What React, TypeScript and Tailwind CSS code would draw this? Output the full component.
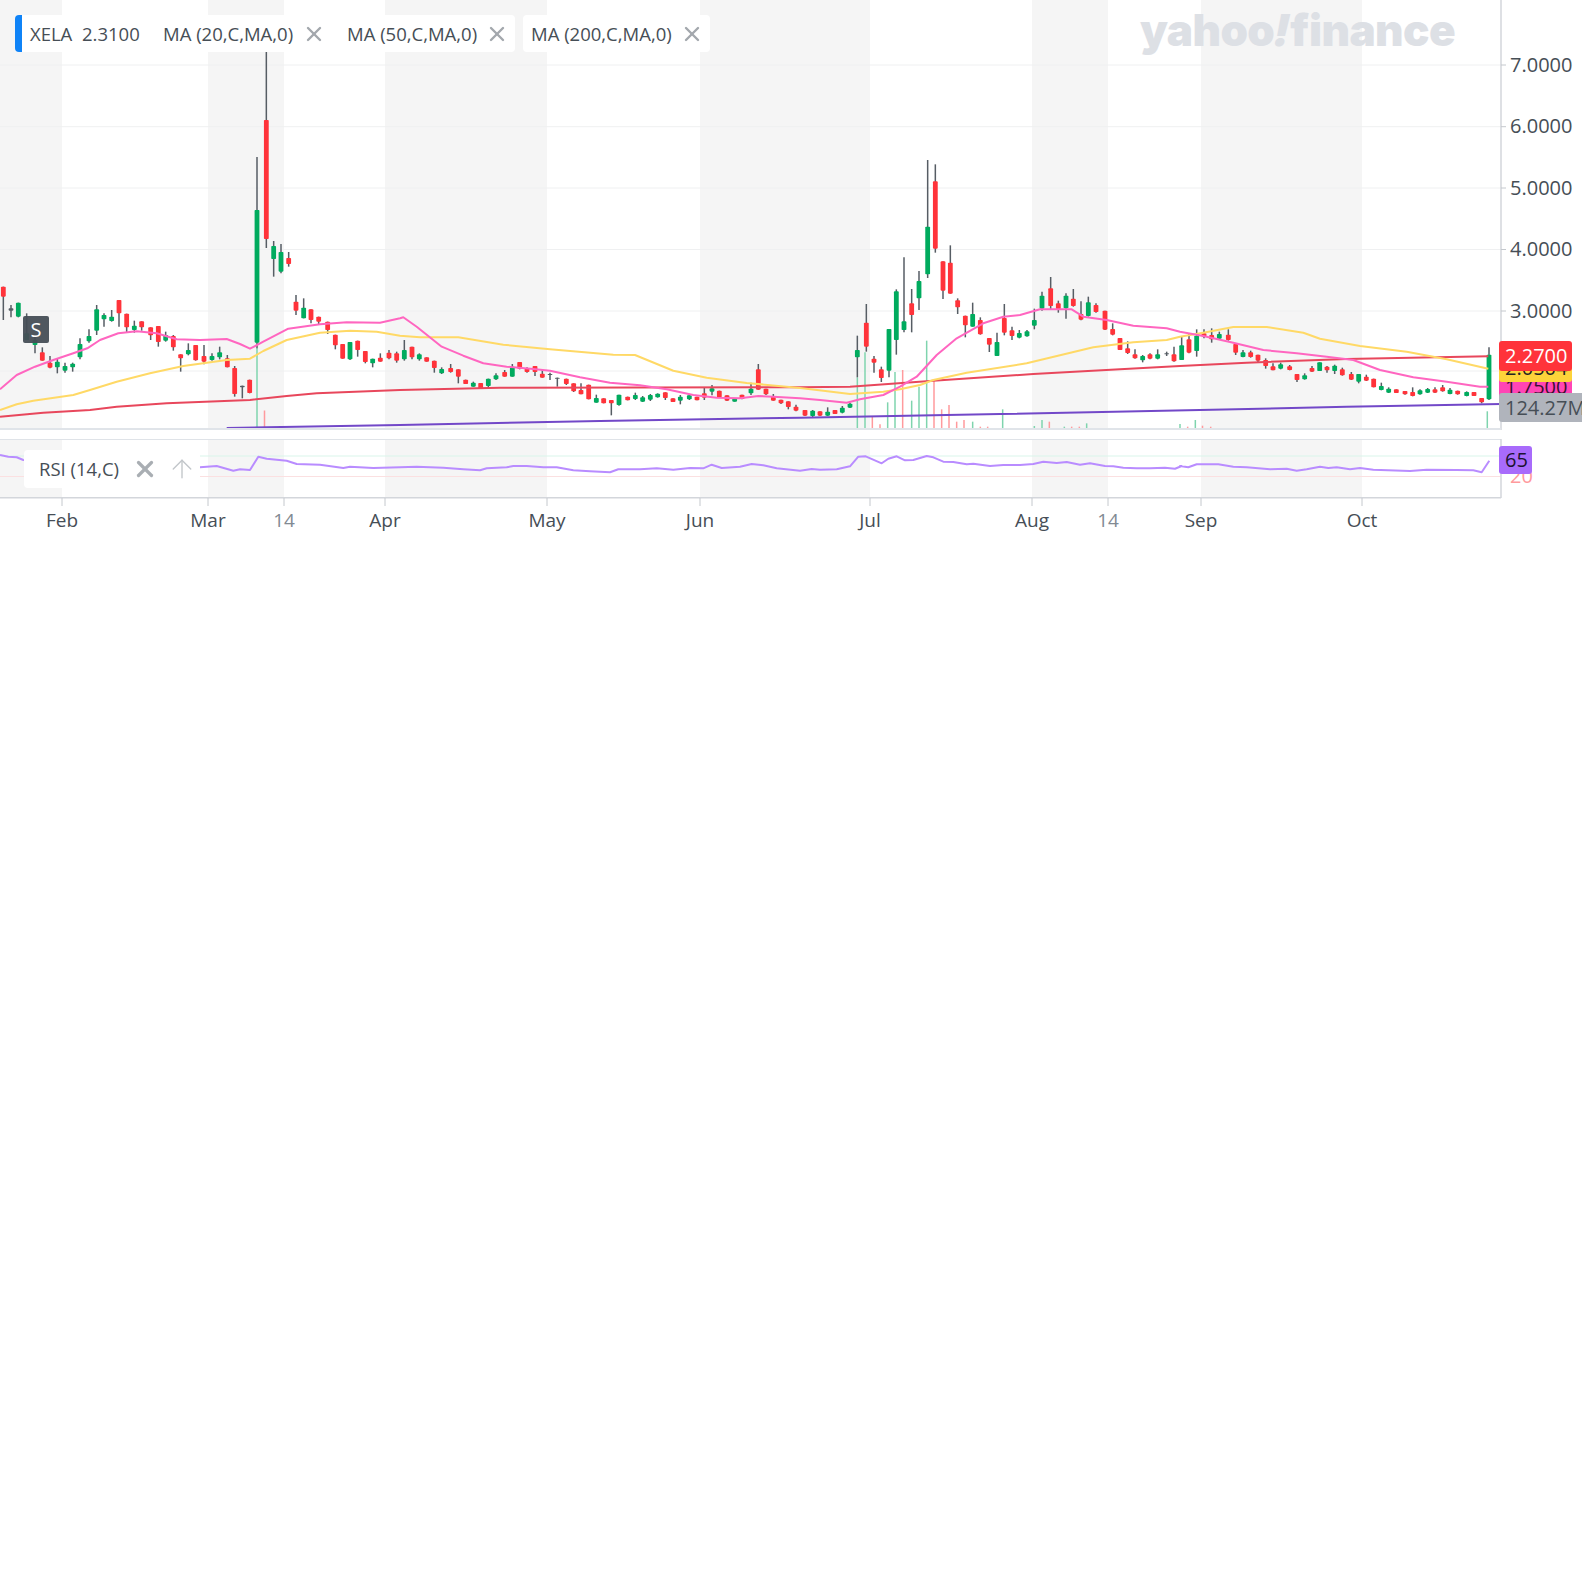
import { X, ArrowUp } from "lucide-react";

type Row = [number, number, number, number, number, number];

interface Candle {
  x: number;
  top: number;
  bot: number;
  wt: number;
  wb: number;
  kind: number;
}

// rows are [x, bodyTop, bodyBottom, wickTop, wickBottom, kind], in crop units (1/3 px)
// kind: 1 green, 0 red, 2 doji
const seg = (x0: number, y0: number, rows: Row[]): Candle[] =>
  rows.map(([x, top, bot, wt, wb, kind]) => ({
    x: x0 + x / 3,
    top: y0 + top / 3,
    bot: y0 + bot / 3,
    wt: y0 + wt / 3,
    wb: y0 + wb / 3,
    kind,
  }));

const candles: Candle[] = [
  ...seg(0, 270, [
    [10, 50, 80, 50, 150, 0], [33, 115, 122, 105, 142, 2], [55, 98, 140, 98, 142, 1],
    [80, 190, 210, 130, 210, 1], [105, 210, 225, 200, 250, 1], [127, 247, 272, 232, 272, 0],
    [150, 278, 293, 258, 295, 0], [172, 275, 292, 265, 310, 1], [195, 288, 302, 278, 308, 1],
    [218, 281, 292, 278, 305, 1], [240, 222, 262, 205, 268, 1], [267, 198, 214, 178, 218, 1],
    [290, 118, 182, 105, 195, 1], [312, 135, 148, 130, 170, 1], [335, 140, 153, 120, 155, 1],
    [357, 90, 130, 90, 170, 0], [380, 131, 172, 131, 188, 0], [403, 167, 180, 152, 188, 1],
    [425, 154, 172, 154, 182, 0], [452, 172, 196, 172, 210, 0], [475, 168, 216, 168, 230, 0],
    [497, 195, 212, 185, 215, 1], [520, 198, 232, 195, 242, 0], [542, 253, 265, 253, 305, 0],
    [565, 240, 253, 220, 256, 1], [587, 225, 271, 225, 272, 0], [612, 258, 275, 225, 283, 0],
    [636, 258, 270, 250, 272, 1], [659, 247, 262, 230, 268, 1], [682, 265, 292, 255, 292, 0],
    [704, 294, 372, 288, 380, 0], [727, 347, 352, 347, 385, 2], [749, 329, 369, 329, 370, 0],
    [771, -180, 218, -339, 235, 1], [799, -450, -93, -654, -66, 0], [821, -72, -33, -87, 20, 1],
    [843, -54, 5, -78, 10, 1], [866, -36, -18, -54, -10, 0], [888, 95, 122, 75, 135, 0],
    [911, 113, 145, 85, 145, 1], [933, 118, 150, 118, 160, 0], [956, 140, 155, 140, 162, 0],
    [983, 155, 180, 155, 192, 0], [1006, 194, 226, 194, 238, 0], [1028, 222, 266, 222, 266, 0],
    [1050, 216, 268, 216, 270, 1], [1073, 212, 240, 212, 260, 0], [1096, 243, 276, 243, 280, 0],
    [1118, 266, 280, 266, 292, 1], [1141, 263, 275, 250, 275, 0], [1167, 248, 265, 240, 268, 0],
    [1190, 250, 272, 245, 278, 0],
  ]),
  ...seg(400, 270, [
    [13, 240, 268, 210, 272, 1], [36, 230, 262, 230, 268, 0], [58, 253, 268, 250, 272, 1],
    [80, 262, 275, 262, 275, 0], [103, 272, 294, 272, 308, 0], [125, 297, 310, 292, 312, 1],
    [152, 294, 306, 282, 308, 0], [175, 298, 320, 298, 340, 0], [197, 329, 342, 329, 342, 0],
    [220, 338, 350, 335, 350, 1], [242, 339, 356, 339, 356, 0], [265, 326, 348, 326, 356, 1],
    [288, 316, 328, 310, 330, 1], [314, 306, 320, 300, 320, 0], [337, 290, 320, 282, 320, 1],
    [359, 276, 296, 276, 298, 0], [381, 294, 306, 292, 308, 0], [405, 288, 306, 288, 318, 0],
    [427, 311, 323, 300, 323, 0], [450, 312, 315, 308, 330, 2], [472, 323, 326, 323, 350, 2],
    [499, 326, 342, 326, 345, 0], [521, 340, 364, 340, 366, 0], [543, 360, 373, 340, 373, 0],
    [566, 344, 388, 344, 388, 0], [589, 384, 398, 374, 398, 1], [611, 385, 400, 385, 400, 0],
    [634, 390, 400, 390, 436, 0], [657, 374, 405, 374, 407, 1], [683, 380, 391, 380, 391, 0],
    [706, 375, 387, 368, 390, 1], [728, 382, 395, 378, 396, 1], [751, 375, 389, 372, 393, 1],
    [773, 371, 382, 370, 383, 1], [796, 367, 384, 367, 390, 0], [819, 385, 396, 385, 396, 0],
    [841, 380, 392, 375, 403, 1], [868, 376, 388, 374, 390, 1], [891, 380, 391, 380, 391, 0],
    [913, 370, 383, 352, 390, 0], [936, 355, 365, 345, 376, 1], [958, 362, 382, 362, 384, 0],
    [981, 376, 392, 376, 393, 0], [1004, 386, 395, 386, 395, 1], [1026, 374, 387, 374, 388, 0],
    [1053, 356, 370, 338, 375, 1], [1075, 298, 359, 282, 359, 0], [1098, 356, 373, 356, 375, 0],
    [1120, 380, 392, 372, 392, 0], [1143, 389, 400, 389, 402, 0], [1165, 394, 411, 394, 418, 0],
    [1188, 410, 422, 404, 424, 0],
  ]),
  ...seg(800, 140, [
    [15, 810, 827, 810, 828, 0], [38, 812, 828, 810, 832, 1], [60, 814, 827, 814, 828, 0],
    [83, 815, 827, 802, 828, 1], [105, 810, 822, 810, 822, 0], [127, 803, 818, 798, 820, 1],
    [150, 791, 803, 788, 804, 1], [172, 630, 652, 587, 712, 1], [199, 548, 620, 492, 635, 0],
    [222, 656, 668, 648, 698, 0], [244, 688, 714, 680, 726, 0], [267, 567, 692, 567, 712, 1],
    [289, 454, 600, 448, 644, 1], [312, 544, 570, 352, 577, 1], [335, 490, 525, 447, 577, 0],
    [357, 423, 475, 393, 510, 1], [383, 260, 403, 60, 414, 1], [406, 124, 326, 73, 338, 0],
    [429, 364, 452, 364, 477, 0], [451, 368, 461, 316, 461, 0], [473, 481, 502, 475, 522, 0],
    [496, 527, 556, 527, 592, 0], [518, 522, 560, 488, 560, 1], [541, 540, 583, 532, 584, 0],
    [568, 594, 614, 594, 636, 0], [591, 606, 648, 578, 648, 1], [613, 534, 578, 492, 586, 0],
    [636, 571, 588, 560, 600, 0], [658, 579, 593, 570, 595, 1], [681, 574, 589, 570, 590, 1],
    [703, 540, 557, 506, 568, 1], [726, 467, 506, 455, 512, 1], [752, 445, 498, 411, 510, 0],
    [775, 490, 507, 482, 518, 0], [798, 467, 505, 460, 536, 1], [820, 476, 498, 447, 500, 0],
    [843, 522, 539, 484, 541, 0], [865, 487, 528, 470, 530, 1], [888, 495, 516, 490, 518, 0],
    [915, 512, 569, 512, 570, 0], [938, 567, 584, 550, 586, 0], [960, 594, 630, 594, 630, 0],
    [983, 625, 639, 604, 642, 0], [1005, 643, 655, 628, 656, 0], [1028, 648, 661, 645, 667, 1],
    [1050, 643, 656, 640, 658, 0], [1073, 643, 656, 628, 658, 1], [1100, 640, 643, 635, 648, 2],
    [1122, 643, 664, 620, 665, 0], [1145, 616, 660, 588, 660, 1], [1167, 598, 638, 580, 640, 0],
    [1190, 587, 633, 568, 650, 1],
  ]),
  ...seg(1180, 270, [
    [72, 190, 200, 178, 205, 0], [95, 195, 208, 175, 218, 0], [118, 192, 206, 185, 208, 1],
    [145, 194, 210, 178, 212, 0], [167, 222, 248, 222, 255, 0], [189, 247, 261, 240, 262, 1],
    [212, 247, 261, 242, 263, 0], [234, 254, 272, 254, 276, 0], [257, 270, 288, 265, 296, 0],
    [279, 289, 301, 280, 301, 0], [302, 283, 296, 278, 298, 1], [329, 289, 300, 285, 301, 0],
    [351, 312, 330, 312, 336, 0], [374, 316, 328, 310, 329, 1], [396, 294, 305, 288, 306, 0],
    [419, 277, 303, 277, 303, 1], [441, 290, 301, 288, 308, 0], [464, 287, 303, 284, 312, 1],
    [487, 298, 316, 293, 317, 0], [514, 312, 329, 306, 330, 0], [536, 312, 335, 312, 340, 1],
    [559, 320, 332, 314, 333, 0], [581, 326, 352, 326, 352, 0], [604, 348, 360, 338, 361, 1],
    [626, 356, 368, 352, 369, 1], [649, 358, 369, 358, 369, 0], [675, 363, 373, 363, 374, 0],
    [698, 366, 378, 352, 379, 0], [720, 361, 373, 358, 374, 1], [743, 357, 368, 354, 369, 1],
    [765, 358, 368, 352, 369, 0], [788, 352, 364, 345, 365, 0], [810, 359, 372, 354, 373, 1],
    [833, 362, 373, 362, 374, 0], [860, 366, 378, 364, 379, 1], [882, 366, 378, 366, 378, 0],
    [905, 384, 397, 384, 400, 0], [927, 254, 388, 232, 390, 1],
  ]),
];

const pts = (x0: number, y0: number, p: number[][]) =>
  p.map(([x, y]) => `${(x0 + x / 3).toFixed(1)},${(y0 + y / 3).toFixed(1)}`).join(" ");

const ma20 = [
  pts(0, 270, [[0, 358], [50, 315], [105, 290], [160, 270], [220, 250], [262, 235], [300, 210], [355, 190], [410, 184], [470, 190], [530, 208], [600, 210], [680, 207], [720, 222], [750, 236], [790, 215], [865, 176], [960, 163], [1040, 157], [1140, 158], [1200, 145]]),
  pts(400, 270, [[10, 142], [50, 170], [125, 230], [190, 257], [250, 280], [320, 290], [400, 297], [450, 302], [540, 322], [630, 338], [720, 346], [800, 358], [880, 375], [950, 383], [1020, 385], [1075, 378], [1120, 380], [1200, 385]]),
  pts(800, 140, [[60, 780], [140, 788], [180, 778], [250, 765], [300, 740], [350, 710], [410, 645], [470, 595], [550, 550], [610, 530], [660, 525], [720, 508], [815, 508], [850, 530], [920, 540], [1000, 557], [1100, 565]]),
  pts(1180, 270, [[0, 185], [70, 198], [160, 218], [250, 240], [350, 250], [440, 260], [520, 270], [600, 300], [700, 322], [800, 335], [900, 350], [925, 350]]),
].join(" ");

const ma50 = [
  pts(0, 270, [[0, 420], [50, 403], [100, 392], [220, 375], [270, 360], [350, 335], [450, 310], [550, 288], [680, 270], [750, 266], [790, 243], [860, 210], [960, 188], [1050, 182], [1130, 185], [1200, 197]]),
  pts(400, 270, [[60, 202], [175, 202], [310, 224], [450, 238], [640, 254], [705, 255], [820, 302], [920, 323], [1040, 339], [1200, 354]]),
  pts(800, 140, [[70, 752], [150, 762], [250, 755], [300, 748], [360, 735], [400, 720], [500, 698], [680, 670], [880, 622], [1000, 607], [1100, 600]]),
  pts(1180, 270, [[0, 200], [70, 188], [160, 171], [260, 171], [370, 188], [420, 206], [540, 228], [680, 245], [800, 268], [925, 296]]),
].join(" ");

const ma200 = [
  pts(0, 270, [[0, 440], [130, 428], [270, 420], [350, 410], [500, 400], [750, 390], [860, 378], [950, 370], [1200, 360]]),
  pts(400, 270, [[300, 353], [1200, 352]]),
  pts(800, 140, [[150, 740], [400, 722], [700, 702], [960, 688]]),
  pts(1180, 270, [[0, 288], [200, 278], [500, 267], [925, 259]]),
].join(" ");

const volMa = [
  pts(0, 270, [[680, 474], [800, 472], [1200, 465]]),
  pts(400, 270, [[600, 453], [1200, 443]]),
  pts(800, 140, [[600, 822], [1200, 810]]),
  pts(1180, 270, [[500, 410], [963, 402]]),
].join(" ");

const rsi = [
  pts(0, 270, [[0, 555], [25, 560], [50, 562], [70, 570], [600, 592], [650, 588], [700, 602], [720, 598], [750, 600], [775, 560], [800, 566], [860, 572], [890, 582], [960, 584], [1030, 594], [1050, 590], [1120, 594]]),
  pts(400, 270, [[0, 592], [50, 590], [130, 593], [190, 598], [240, 601], [260, 595], [320, 592], [340, 588], [380, 588], [430, 592], [470, 592], [520, 601], [570, 604], [630, 607], [655, 598], [720, 598], [770, 595], [820, 599], [870, 594], [910, 595], [935, 584], [965, 594], [1020, 590], [1055, 582], [1090, 586], [1130, 595], [1200, 602]]),
  pts(800, 425, [[35, 132], [60, 134], [110, 133], [150, 124], [175, 95], [197, 94], [245, 115], [265, 101], [290, 94], [315, 106], [340, 105], [380, 93], [400, 97], [430, 110], [460, 111], [500, 118], [520, 116], [570, 123], [610, 120], [660, 120], [700, 117], [730, 110], [770, 114], [800, 111], [840, 119], [870, 115], [915, 123], [940, 124], [970, 128], [1010, 130], [1050, 130], [1095, 128], [1125, 131], [1145, 123]]),
  pts(1180, 270, [[0, 588], [25, 592], [50, 583], [115, 583], [160, 590], [200, 592], [270, 598], [320, 596], [350, 602], [380, 598], [420, 590], [445, 594], [470, 592], [510, 598], [540, 594], [580, 599], [690, 603], [740, 599], [830, 600], [880, 601], [905, 607], [928, 572]]),
].join(" ");

// [x in px, top y in px, 1 green / 0 red]
const volume: number[][] = [
  [257, 348, 1], [264.5, 410.5, 0],
  ...[
    [172, 712, 1], [195, 637, 1], [217, 830, 0], [240, 853, 0], [263, 787, 1], [285, 696, 1],
    [308, 690, 0], [335, 782, 1], [357, 740, 1], [380, 602, 1], [402, 722, 0], [425, 808, 0],
    [447, 795, 0], [470, 845, 0], [492, 840, 0], [518, 845, 1], [541, 860, 0], [563, 860, 0],
    [608, 808, 1], [703, 858, 1], [726, 840, 1], [748, 845, 0], [793, 860, 1], [815, 860, 0],
    [838, 860, 0], [860, 850, 1], [1140, 852, 1], [1163, 860, 0], [1186, 840, 1],
  ].map(([x, y, c]) => [800 + x / 3, 140 + y / 3, c]),
  [1202.5, 425.7, 0], [1210.7, 426.7, 0], [1487.3, 411.3, 1],
];

const bands = [[0, 62], [208, 284], [385, 547], [700, 870], [1032, 1108], [1201, 1362]];
const prices = [["7.0000", 65], ["6.0000", 126.7], ["5.0000", 188], ["4.0000", 249.5], ["3.0000", 311]] as const;
const months = [
  ["Feb", 62, false], ["Mar", 208, false], ["14", 284, true], ["Apr", 385, false], ["May", 547, false], ["Jun", 700, false],
  ["Jul", 870, false], ["Aug", 1032, false], ["14", 1108, true], ["Sep", 1201, false], ["Oct", 1362, false],
] as const;

function Chart() {
  return (
    <svg width={1582} height={540} viewBox="0 0 1582 540" className="block font-['Open_Sans',sans-serif]">
      {bands.map(([a, b]) => (
        <g key={a} className="fill-[#f5f5f5]">
          <rect x={a} y={0} width={b - a} height={429} />
          <rect x={a} y={440} width={b - a} height={58} />
        </g>
      ))}
      {[65, 126.7, 188, 249.5, 311, 371].map((y) => (
        <line key={y} x1={0} x2={1501} y1={y} y2={y} stroke="#eff0f1" strokeWidth={1} />
      ))}
      <line x1={0} x2={1501} y1={456} y2={456} stroke="#d9f5ea" />
      <line x1={0} x2={1501} y1={476.5} y2={476.5} stroke="#fbe0e1" />

      {volume.map(([x, y, c]) => (
        <line key={x} x1={x} x2={x} y1={y} y2={428} stroke={c ? "#7fd4ae" : "#ff9a9d"} strokeWidth={1.5} />
      ))}

      {candles.map((c) => (
        <g key={c.x}>
          <line x1={c.x} x2={c.x} y1={c.wt} y2={c.wb} stroke="#565d64" strokeWidth={1.5} />
          <rect
            x={c.x - 2.4}
            y={c.top}
            width={4.8}
            height={c.bot - c.top}
            rx={0.8}
            fill={c.kind === 1 ? "#00ab5e" : c.kind === 0 ? "#ff333a" : "#565d64"}
          />
        </g>
      ))}

      <polyline points={volMa} fill="none" stroke="#7248c8" strokeWidth={2} />
      <polyline points={ma200} fill="none" stroke="#e8475c" strokeWidth={2} />
      <polyline points={ma50} fill="none" stroke="#ffd966" strokeWidth={2} strokeLinejoin="round" />
      <polyline points={ma20} fill="none" stroke="#ff66c0" strokeWidth={2} strokeLinejoin="round" />
      <polyline points={rsi} fill="none" stroke="#b98cff" strokeWidth={2} strokeLinejoin="round" />

      {/* panel frames */}
      <line x1={1501} x2={1501} y1={0} y2={430} stroke="#d3d6db" strokeWidth={1.5} />
      <line x1={0} x2={1501} y1={429} y2={429} stroke="#e0e4e9" strokeWidth={2} />
      <line x1={0} x2={1501} y1={439.5} y2={439.5} stroke="#dfe3e8" strokeWidth={1.2} />
      <line x1={1501} x2={1501} y1={439} y2={498} stroke="#d3d6db" strokeWidth={1.5} />
      <line x1={0} x2={1501} y1={497.7} y2={497.7} stroke="#d3d6db" strokeWidth={1.5} />

      {prices.map(([label, y]) => (
        <g key={label}>
          <line x1={1501} x2={1506} y1={y} y2={y} stroke="#c4c8cd" />
          <text x={1510} y={y + 6.5} className="fill-[#464e56] text-[20px]">
            {label}
          </text>
        </g>
      ))}
      <text x={1510} y={483} className="fill-[#ff9a9d] text-[20px]">
        20
      </text>

      {months.map(([label, x, minor]) => (
        <g key={`${label}${x}`}>
          <line x1={x} x2={x} y1={498} y2={506} stroke="#c4c8cd" />
          <text
            x={x}
            y={527}
            textAnchor="middle"
            className={minor ? "fill-[#828a93] text-[19px] font-medium" : "fill-[#464e56] text-[19px] font-medium"}
          >
            {label}
          </text>
        </g>
      ))}
    </svg>
  );
}

function Tag({ className, children }: { className: string; children: React.ReactNode }) {
  return (
    <div className={`absolute left-[1499px] flex items-center pl-[6px] rounded-[3px] overflow-hidden text-[20px] leading-none whitespace-nowrap ${className}`}>
      {children}
    </div>
  );
}

export default function App() {
  return (
    <div className="min-h-screen w-[1582px] bg-white overflow-hidden font-['Open_Sans',sans-serif] text-[#464e56]">
      <div className="relative h-[540px]">
        <Chart />

        <div className="absolute left-[1140px] top-[2px] font-['Inter',sans-serif] font-black text-[44px] leading-[56px] tracking-[-0.6px] text-[#dde0e5]">
          yahoo<span className="inline-block -skew-x-12">!</span>finance
        </div>

        <div className="absolute left-[15px] top-[15px] flex gap-2 text-[18.5px] leading-none">
          <div className="flex h-[37px] w-[500px] items-center rounded-[4px] bg-white">
            <div className="h-full w-[7px] rounded-l-[4px] bg-[#0f83f7]" />
            <span className="ml-[8px] w-[52px] pt-[1px]">XELA</span>
            <span className="w-[81px] pt-[1px]">2.3100</span>
            <span className="w-[138.5px] whitespace-nowrap pt-[1px]">MA (20,C,MA,0)</span>
            <X className="h-[24px] w-[24px] text-[#a3a8ad]" strokeWidth={2.4} />
            <span className="ml-[21.5px] w-[138px] whitespace-nowrap pt-[1px]">MA (50,C,MA,0)</span>
            <X className="h-[24px] w-[24px] text-[#a3a8ad]" strokeWidth={2.4} />
          </div>
          <div className="flex h-[37px] w-[187px] items-center rounded-[4px] bg-white pl-[8px]">
            <span className="w-[149px] whitespace-nowrap pt-[1px]">MA (200,C,MA,0)</span>
            <X className="h-[24px] w-[24px] text-[#a3a8ad]" strokeWidth={2.4} />
          </div>
        </div>

        <div className="absolute left-[24px] top-[450px] flex h-[38px] w-[176px] items-center rounded-[4px] bg-white pl-[15px] text-[18.5px] leading-none">
          <span className="w-[93px] whitespace-nowrap">RSI (14,C)</span>
          <X className="h-[26px] w-[26px] text-[#a9aeb3]" strokeWidth={3} />
          <ArrowUp className="ml-[9px] h-[30px] w-[30px] text-[#c2c6ca]" strokeWidth={1.1} />
        </div>

        <div className="absolute left-[23px] top-[316px] flex h-[27px] w-[26px] items-center justify-center rounded-[2px] bg-[#464e56]/95 text-[20px] leading-none text-white">
          S
        </div>

        <Tag className="top-[373px] h-[28px] w-[73px] bg-[#ff45b5] text-[#3a1030]">1.7500</Tag>
        <Tag className="top-[354px] h-[28px] w-[73px] bg-[#fdd33a] text-[#222]">2.0504</Tag>
        <Tag className="top-[341px] h-[30px] w-[73px] bg-[#ff333a] text-white">2.2700</Tag>
        <Tag className="top-[393px] h-[29px] w-[90px] bg-[#b0b4bc]">124.27M</Tag>
        <Tag className="top-[446px] h-[28px] w-[33px] bg-[#a86bfb] text-[#1c1230]">65</Tag>
      </div>
    </div>
  );
}
